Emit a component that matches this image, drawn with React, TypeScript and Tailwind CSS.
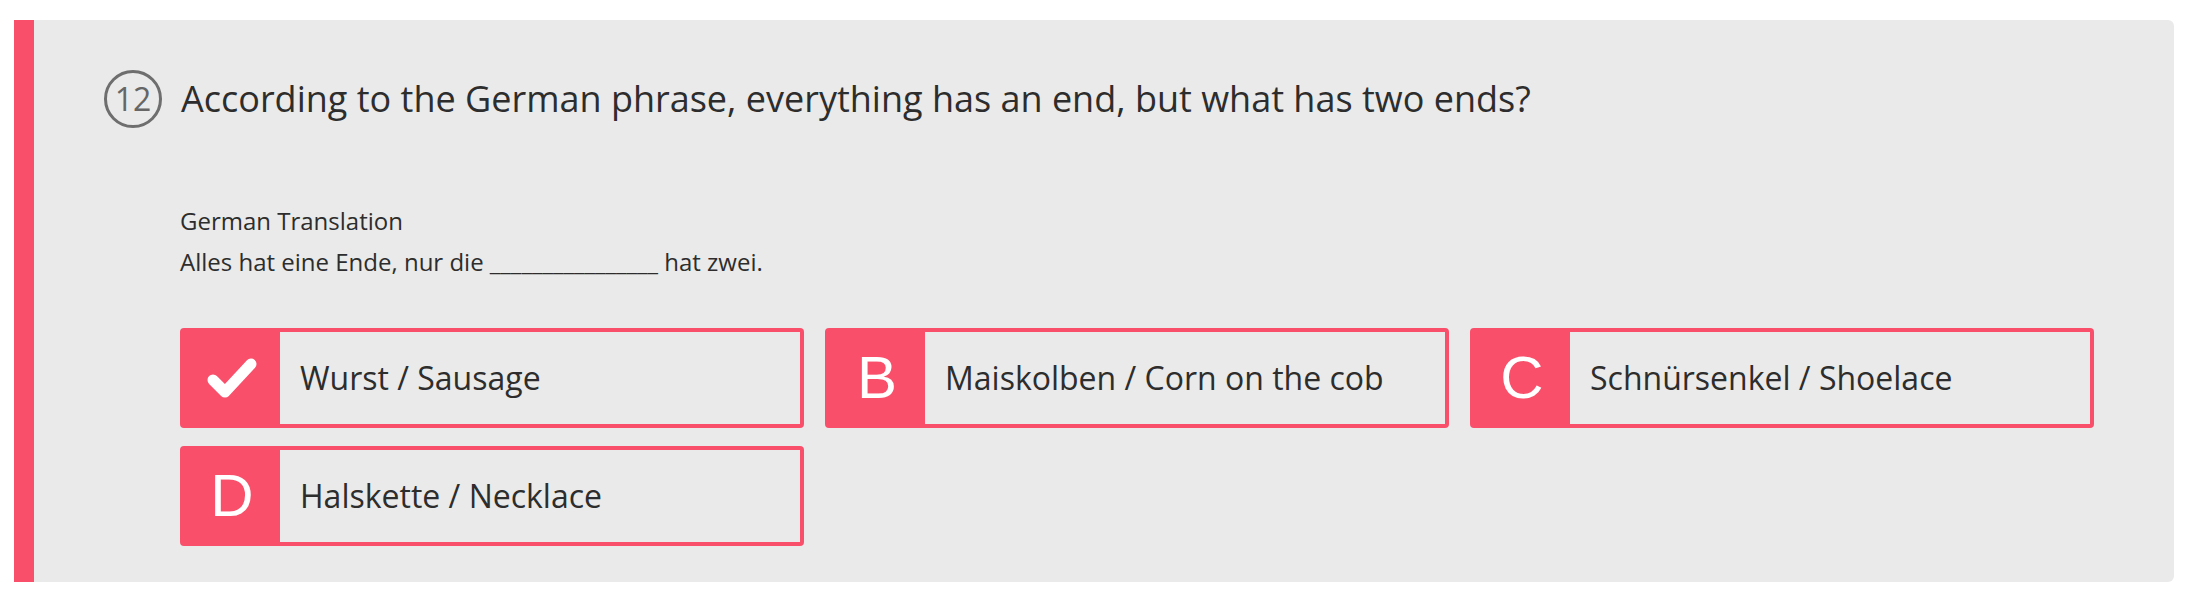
import React from "react";

const RED = "#f94f6b";

const options = [
  { key: "A", text: "Wurst / Sausage", correct: true },
  { key: "B", text: "Maiskolben / Corn on the cob" },
  { key: "C", text: "Schnürsenkel / Shoelace" },
  { key: "D", text: "Halskette / Necklace" },
];

export default function App() {
  return (
    <div className="min-h-screen bg-white pt-[20px] pl-[14px] pr-[16px] font-['Open_Sans',sans-serif]">
      <div className="h-[562px] bg-[#eaeaea] border-l-[20px] border-[#f94f6b] rounded-r-[6px] pt-[50px] pl-[70px]">
        {/* Question header */}
        <div className="flex items-center gap-[19px]">
          <div className="w-[58px] h-[58px] rounded-full border-[3px] border-[#6e6e6e] flex items-center justify-center text-[32px] leading-none text-[#666]">
            12
          </div>
          <h2 className="text-[36px] leading-[54px] text-[#2d2d2d]">
            According to the German phrase, everything has an end, but what has two ends?
          </h2>
        </div>

        <div className="ml-[76px] mt-[72px]">
          <div className="text-[24px] leading-[41px] text-[#2d2d2d]">German Translation</div>
          <div className="text-[24px] leading-[41px] text-[#2d2d2d]">
            Alles hat eine Ende, nur die ________________ hat zwei.
          </div>

          {/* Answers */}
          <div className="mt-[46px] flex flex-wrap gap-x-[21px] gap-y-[18px]">
            {options.map((o) => (
              <OptionCard key={o.key} label={o.key} text={o.text} correct={o.correct} />
            ))}
          </div>
        </div>
      </div>
    </div>
  );
}

const OptionCard = ({ label, text, correct }: any) => (
  <div className="w-[624px] h-[100px] flex rounded-[4px] border-[4px] border-[#f94f6b] overflow-hidden">
    <div className="w-[96px] bg-[#f94f6b] flex items-center justify-center">
      {correct ? (
        <svg width="51" height="43" viewBox="0 0 51 43" fill="none">
          <polyline
            points="6,23 18,35 44,7"
            stroke="white"
            strokeWidth="11"
            strokeLinecap="round"
            strokeLinejoin="round"
          />
        </svg>
      ) : (
        <span className="font-['Liberation_Sans',sans-serif] text-[60px] leading-none text-white">
          {label}
        </span>
      )}
    </div>
    <div className="flex-1 flex items-center pl-[20px] text-[32px] text-[#2d2d2d]">{text}</div>
  </div>
);
